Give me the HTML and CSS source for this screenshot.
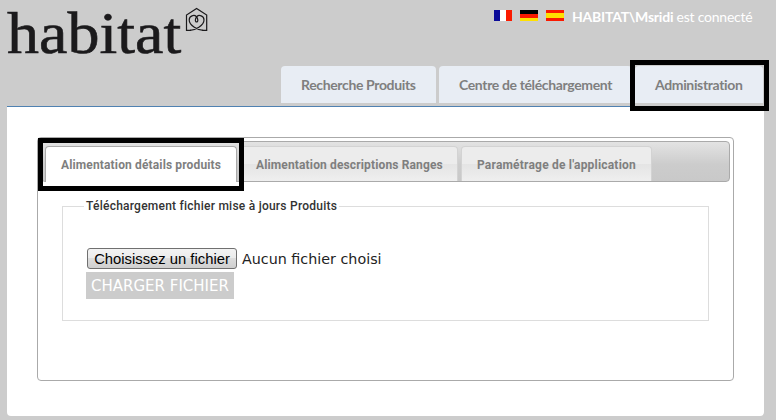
FILE: index.html
```html
<!DOCTYPE html>
<html lang="fr">
<head>
<meta charset="utf-8">
<title>Habitat</title>
<link rel="stylesheet" href="styles.css">
</head>
<body>
<header class="header">
  <div class="top">
    <div class="logo">
      <span class="wordmark">habitat</span>
      <svg class="house" width="24" height="26" viewBox="0 0 24 26" fill="none" stroke="#1b1a1c" stroke-width="1.2">
        <path d="M6 24.300 H1.500 V9 L11.600 2.400 L21.700 9 V24.300 H17.200"/>
        <path d="M5 24.300 C10 24.300 19 19.500 19 14 C19 9.500 13.800 8.500 12 10.500 C9.800 12.500 10 16 11.600 16 C13.200 16 13.400 12.500 11.200 10.500 C9.400 8.500 4.200 9.500 4.200 14 C4.200 19.500 13.200 24.300 18.200 24.300"/>
      </svg>
    </div>
    <div class="user">
      <svg width="18" height="11"><path fill="#0b0b98" d="M0 0h6v11H0z"/><path fill="#fff" d="M6 0h6v11H6z"/><path fill="#fa1a00" d="M12 0h6v11h-6z"/></svg>
      <svg width="18" height="11"><path d="M0 0h18v4H0z"/><path fill="#fa1a00" d="M0 4h18v4H0z"/><path fill="#ffe000" d="M0 8h18v3H0z"/></svg>
      <svg width="18" height="11"><path fill="#fa1a00" d="M0 0h18v11H0z"/><path fill="#ffe000" d="M0 3h18v5H0z"/></svg>
      <span class="who"><b>HABITAT\Msridi</b> <span class="state">est connecté</span></span>
    </div>
  </div>
  <nav class="nav">
    <a class="n1"><span>Recherche Produits</span></a>
    <a class="n2"><span>Centre de téléchargement</span></a>
    <a class="n3"><span>Administration</span></a>
  </nav>
</header>
<main class="page">
  <section class="tabs">
    <div class="tabbar">
      <a class="tab t1 active"><span>Alimentation détails produits</span></a>
      <a class="tab t2"><span>Alimentation descriptions Ranges</span></a>
      <a class="tab t3"><span>Paramétrage de l'application</span></a>
    </div>
    <fieldset class="upload">
      <legend>Téléchargement fichier mise à jours Produits</legend>
      <div class="file"><button class="choose">Choisissez un fichier</button><span class="none">Aucun fichier choisi</span></div>
      <button class="send">CHARGER FICHIER</button>
    </fieldset>
  </section>
</main>
<div class="mark mark-nav"></div>
<div class="mark mark-tab"></div>
</body>
</html>
```
FILE: styles.css
```css
* { box-sizing: border-box; }
body { margin: 0; width: 776px; height: 420px; overflow: hidden; background: #ccc; font-family: Lato, sans-serif; }
.header { height: 107px; margin: 0 12px 0 7px; border-bottom: 1px solid #4f81b1; }
.top { display: flex; justify-content: space-between; height: 66px; }
.logo { display: flex; align-items: flex-start; }
.wordmark { width: 178px; font: 59px/66px "Liberation Serif", serif; color: #1b1a1c; -webkit-text-stroke: .6px #1b1a1c; white-space: nowrap; transform: scaleX(1.085); transform-origin: 0 0; }
.house { margin-top: 6px; }
.user { display: flex; gap: 8px; padding: 10px 11px 0 0; }
.who { width: 181px; font-size: 14px; line-height: 17px; letter-spacing: -.23px; margin-top: -2px; color: #fff; white-space: nowrap; }
.nav { display: flex; gap: 3px; justify-content: flex-end; height: 37px; margin-right: 1px; }
.nav a { background: #e8edf4; border-radius: 4px 4px 0 0; padding-left: 20px; font-weight: 700; font-size: 14px; line-height: 37px; letter-spacing: -.36px; color: #7f7f7f; white-space: nowrap; }
.n1 { width: 155px; }
.n2 { width: 193px; }
.n3 { width: 128px; }
.page { width: 757px; height: 309px; margin-left: 7px; padding: 30px; background: #fff; border-radius: 0 0 4px 4px; }
.tabs { width: 697px; height: 244px; padding: 3px; border: 1px solid #aaa; border-radius: 4px; }
.tabbar { display: flex; gap: 3px; height: 41px; padding: 4px 3px 0; border: 1px solid #aaa; border-radius: 4px; background: linear-gradient(#e3e3e3, #ccc 58%, #c9c9c9); }
.tab { height: 35px; padding-left: 15px; border: 1px solid #d3d3d3; border-bottom: 0; border-radius: 4px 4px 0 0; background: linear-gradient(#ececec 0 50%, #e4e4e4 50%, #efefef); font: 700 12px/36px Roboto, sans-serif; letter-spacing: .14px; color: #7f7f7f; white-space: nowrap; }
.tab.active { height: 36px; background: #fff; border-color: #aaa; }
.t1 { width: 192px; }
.t2 { width: 218px; }
.t3 { width: 191px; letter-spacing: .2px; }
.upload { width: 647px; height: 123px; margin: 16px 0 0 21px; padding: 34px 0 0 23px; border: 1px solid #ddd; }
.upload legend { margin-left: -2px; padding: 0 2px; font: 500 12px/16px Roboto, sans-serif; letter-spacing: .24px; color: #333; white-space: nowrap; }
.file { display: flex; align-items: center; height: 21px; margin-left: 1px; }
.choose { width: 150px; height: 21px; padding: 0; border: 1px solid #707070; border-radius: 3px; background: linear-gradient(#f3f3f3, #ebebeb 50%, #ddd 50%, #cfcfcf); font: 14.8px/18px "Liberation Sans", sans-serif; color: #000; white-space: nowrap; }
.none { margin-left: 5px; font: 14.3px/20px "DejaVu Sans", sans-serif; color: #222; white-space: nowrap; }
.send { display: block; width: 148px; height: 27px; margin-top: 3px; padding: 1px 0 0; border: 0; background: #ccc; color: #fff; font: 15px/26px "DejaVu Sans", sans-serif; white-space: nowrap; }
.mark { position: absolute; border: 5px solid #000; }
.mark-nav { left: 630px; top: 60px; width: 139px; height: 51px; }
.mark-tab { left: 38px; top: 138px; width: 206px; height: 53px; }
```
